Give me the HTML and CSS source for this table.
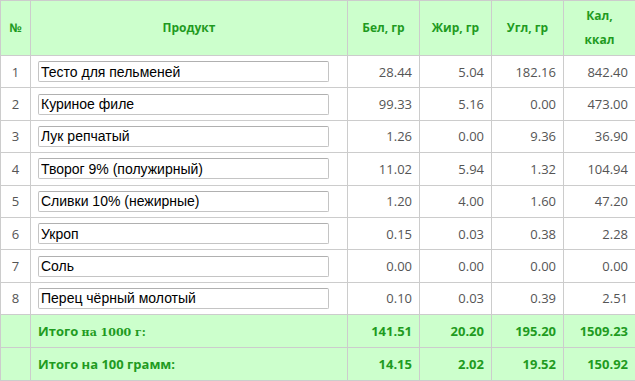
FILE: index.html
```html
<!DOCTYPE html>
<html lang="ru">
<head>
<meta charset="utf-8">
<link rel="stylesheet" href="styles.css">
</head>
<body>
<table class="calc">
  <colgroup>
    <col class="c-num"><col class="c-prod"><col class="c-val"><col class="c-val"><col class="c-val"><col class="c-kal">
  </colgroup>
  <thead>
    <tr>
      <th>№</th><th>Продукт</th><th>Бел, гр</th><th>Жир, гр</th><th>Угл, гр</th><th>Кал,<br>ккал</th>
    </tr>
  </thead>
  <tbody>
    <tr><td class="idx">1</td><td class="prod"><input class="inp" value="Тесто для пельменей"></td><td>28.44</td><td>5.04</td><td>182.16</td><td>842.40</td></tr>
    <tr><td class="idx">2</td><td class="prod"><input class="inp" value="Куриное филе"></td><td>99.33</td><td>5.16</td><td>0.00</td><td>473.00</td></tr>
    <tr><td class="idx">3</td><td class="prod"><input class="inp" value="Лук репчатый"></td><td>1.26</td><td>0.00</td><td>9.36</td><td>36.90</td></tr>
    <tr><td class="idx">4</td><td class="prod"><input class="inp" value="Творог 9% (полужирный)"></td><td>11.02</td><td>5.94</td><td>1.32</td><td>104.94</td></tr>
    <tr><td class="idx">5</td><td class="prod"><input class="inp" value="Сливки 10% (нежирные)"></td><td>1.20</td><td>4.00</td><td>1.60</td><td>47.20</td></tr>
    <tr><td class="idx">6</td><td class="prod"><input class="inp" value="Укроп"></td><td>0.15</td><td>0.03</td><td>0.38</td><td>2.28</td></tr>
    <tr><td class="idx">7</td><td class="prod"><input class="inp" value="Соль"></td><td>0.00</td><td>0.00</td><td>0.00</td><td>0.00</td></tr>
    <tr><td class="idx">8</td><td class="prod"><input class="inp" value="Перец чёрный молотый"></td><td>0.10</td><td>0.03</td><td>0.39</td><td>2.51</td></tr>
  </tbody>
  <tfoot>
    <tr class="total"><td></td><td class="label">Итого <span class="serif">на 1000 г:</span></td><td>141.51</td><td>20.20</td><td>195.20</td><td>1509.23</td></tr>
    <tr class="total"><td></td><td class="label">Итого на 100 грамм:</td><td>14.15</td><td>2.02</td><td>19.52</td><td>150.92</td></tr>
  </tfoot>
</table>
</body>
</html>
```

FILE: styles.css
```css
html, body {
  margin: 0;
  padding: 0;
  background: #ffffff;
}

.calc {
  border-collapse: collapse;
  width: 635px;
  table-layout: fixed;
  font-family: "Open Sans", "Noto Sans", sans-serif;
  font-size: 13px;
  color: #555555;
}

.c-num { width: 30px; }
.c-prod { width: 317px; }
.c-val { width: 72px; }
.c-kal { width: 72px; }

.calc th,
.calc td {
  border: 1px solid #cccccc;
}

.calc th {
  background: #ccffcc;
  color: #1f9b1f;
  font-weight: 700;
  font-size: 12px;
  line-height: 24px;
  height: 54px;
  padding: 0 4px;
  text-align: center;
}

.calc td {
  height: 31.4px;
  padding: 0 7px 0 4px;
  text-align: right;
}

.calc td.idx {
  text-align: center;
  padding: 0;
}

.calc td.prod {
  text-align: left;
  padding: 0 18px 0 7px;
}

.inp {
  box-sizing: border-box;
  width: 100%;
  height: 21px;
  margin: 0;
  padding: 0 2px;
  border: 1px solid #c4c4c4;
  border-top-color: #b0b0b0;
  border-radius: 2px;
  font-family: "Liberation Sans", Arial, sans-serif;
  font-size: 14px;
  color: #000000;
  background: #ffffff;
  display: block;
}

.total td {
  background: #ccffcc;
  color: #1f9b1f;
  font-weight: 700;
  height: 32px;
}

.total td.label {
  text-align: left;
  padding-left: 7px;
}

.serif {
  font-family: "DejaVu Serif", Georgia, serif;
  font-size: 11px;
}
```
